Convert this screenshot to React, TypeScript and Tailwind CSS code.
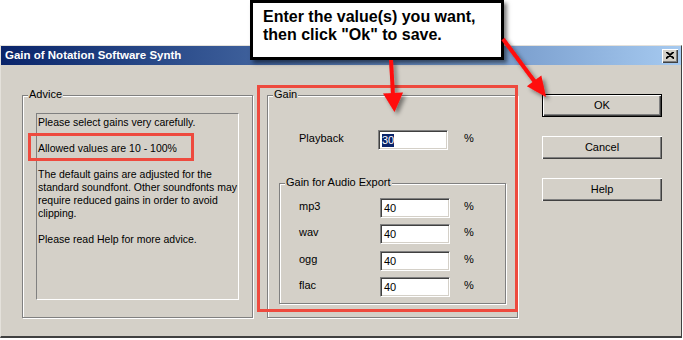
const font = { fontFamily: '"Liberation Sans", Arial, sans-serif' };

const Input = ({ value, selected }: { value: string; selected?: boolean }) => (
    <div className="w-[70px] h-[20px] bg-white border border-t-[#808080] border-l-[#808080] border-b-white border-r-white shadow-[inset_1px_1px_0_#404040,inset_-1px_-1px_0_#d4d0c8] flex items-center pl-[3px] text-[11px] text-black">
        {selected ? <span className="bg-[#0a246a] text-white leading-[13px]">{value}</span> : <span>{value}</span>}
    </div>
);

const Group = ({ label, className, children }: { label: string; className: string; children?: React.ReactNode }) => (
    <div className={`relative border border-[#808080] shadow-[inset_1px_1px_0_#fff,1px_1px_0_#fff] ${className}`}>
        <span className="absolute -top-[8px] left-[5px] px-[1px] bg-[#d4d0c8] text-[11px] leading-[13px] text-black">{label}</span>
        {children}
    </div>
);

const Button = ({ label, isDefault }: { label: string; isDefault?: boolean }) => (
    <div className={`w-[120px] h-[23px] flex items-center justify-center text-[11px] text-black bg-[#d4d0c8] ${isDefault ? 'border border-black shadow-[inset_1px_1px_0_#fff,inset_-1px_-1px_0_#404040,inset_-2px_-2px_0_#808080]' : 'shadow-[inset_1px_1px_0_#fff,inset_-1px_-1px_0_#404040,inset_-2px_-2px_0_#808080]'}`}>
        {label}
    </div>
);

// labels sit a bit above the middle of the edit box, like the dialog does
const Row = ({ label, value }: { label: string; value: string }) => (
    <div className="flex items-center h-[20px]">
        <span className="w-[81px] text-[11px] -mt-[3px]">{label}</span>
        <Input value={value} />
        <span className="ml-[14px] text-[11px] -mt-[3px]">%</span>
    </div>
);

const Arrows = () => (
    <svg className="absolute inset-0 pointer-events-none" width="683" height="340">
        <defs>
            <filter id="sh" x="-50%" y="-50%" width="200%" height="200%">
                <feDropShadow dx="3" dy="3" stdDeviation="2" floodColor="#000" floodOpacity="0.45" />
            </filter>
        </defs>
        <g filter="url(#sh)" fill="#ff0a0a" stroke="#ff0a0a">
            <line x1="391" y1="60" x2="393" y2="95" strokeWidth="4" />
            <polygon points="383,93.6 403,92.4 394.5,112" strokeWidth="0" />
            <line x1="503" y1="39" x2="535" y2="82" strokeWidth="4" />
            <polygon points="526.9,86.2 541.3,75.6 546,97" strokeWidth="0" />
        </g>
    </svg>
);

export default function App() {
    return (
        <div className="relative w-[683px] h-[340px] bg-white overflow-hidden text-black" style={font}>
            <div className="mt-[45px] w-[682px] h-[293px] bg-[#d4d0c8] border-t border-t-[#e4e1db] border-l border-l-[#e4e1db] border-r border-r-[#404040] border-b-2 border-b-[#404040] flex flex-col">
                <div className="h-[19px] bg-gradient-to-r from-[#0a246a] to-[#a6caf0] flex items-center justify-between pl-[4px] pr-[3px]">
                    <span className="text-white font-bold text-[11.5px]">Gain of Notation Software Synth</span>
                    <div className="w-[16px] h-[14px] bg-[#d4d0c8] shadow-[inset_1px_1px_0_#fff,inset_-1px_-1px_0_#404040,inset_-2px_-2px_0_#808080] flex items-center justify-center">
                        <svg width="8" height="7" viewBox="0 0 8 7">
                            <path d="M0 0 L8 7 M8 0 L0 7 M1 0 L8 6 M7 0 L0 6" stroke="#000" strokeWidth="1.2" />
                        </svg>
                    </div>
                </div>
                <div className="flex pl-[21px] pt-[30px]">
                    <Group label="Advice" className="w-[231px] h-[223px]">
                        <div className="ml-[13px] mt-[17px] w-[203px] h-[187px] border border-t-[#808080] border-l-[#808080] border-b-white border-r-white pl-[1px] pt-[2px] text-[10.5px] leading-[13px] whitespace-pre-line">
                            {'Please select gains very carefully.\n\nAllowed values are 10 - 100%\n\nThe default gains are adjusted for the\nstandard soundfont. Other soundfonts may\nrequire reduced gains in order to avoid\nclipping.\n\nPlease read Help for more advice.'}
                        </div>
                    </Group>
                    <Group label="Gain" className="ml-[14px] w-[251px] h-[223px]">
                        <div className="flex items-center h-[20px] mt-[34px] pl-[31px]">
                            <span className="w-[79px] text-[11px] -mt-[3px]">Playback</span>
                            <Input value="30" selected />
                            <span className="ml-[16px] text-[11px] -mt-[3px]">%</span>
                        </div>
                        <Group label="Gain for Audio Export" className="ml-[11px] mt-[33px] w-[227px] h-[121px]">
                            <div className="flex flex-col pl-[19px] pt-[14px]">
                                <Row label="mp3" value="40" />
                                <div className="mt-[6px]"><Row label="wav" value="40" /></div>
                                <div className="mt-[7px]"><Row label="ogg" value="40" /></div>
                                <div className="mt-[6px]"><Row label="flac" value="40" /></div>
                            </div>
                        </Group>
                    </Group>
                    <div className="ml-[24px] -mt-[1px] flex flex-col gap-[19px]">
                        <Button label="OK" isDefault />
                        <Button label="Cancel" />
                        <Button label="Help" />
                    </div>
                </div>
            </div>

            <div className="absolute left-[28px] top-[133px] w-[166px] h-[28px] border-[3px] border-[#ee4a3e]" />
            <div className="absolute left-[257px] top-[85px] w-[261px] h-[227px] border-[3px] border-[#ee4a3e]" />

            <div className="absolute left-[250px] top-0 w-[254px] h-[60px] bg-white border-[3px] border-black shadow-[3px_3px_4px_rgba(0,0,0,0.5)] pl-[10px] pt-[5px] text-[16px] leading-[18px] font-bold">
                <div>Enter the value(s) you want,</div>
                <div>then click "Ok" to save.</div>
            </div>
            <Arrows />
        </div>
    );
}
